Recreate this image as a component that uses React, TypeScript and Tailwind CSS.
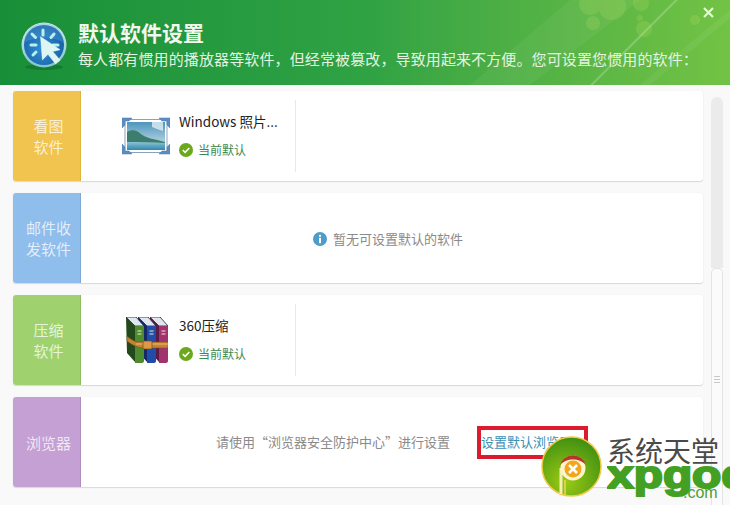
import React from "react";

const cjk = "font-['Noto_Sans_CJK_SC','Microsoft_YaHei',sans-serif]";

const CursorLogo = () => (
  <svg width="46" height="48" viewBox="0 0 46 48" className="shrink-0">
    <defs>
      <linearGradient id="ring" x1="0" y1="0" x2="0" y2="1">
        <stop offset="0" stopColor="#d6f0f2" />
        <stop offset="1" stopColor="#7fc3c9" />
      </linearGradient>
      <radialGradient id="disc" cx="0.45" cy="0.6" r="0.7">
        <stop offset="0" stopColor="#2f8ed6" />
        <stop offset="1" stopColor="#14579c" />
      </radialGradient>
    </defs>
    <ellipse cx="23" cy="45" rx="19" ry="3" fill="#0d6a2a" opacity="0.55" />
    <circle cx="23" cy="23" r="22.5" fill="url(#ring)" />
    <circle cx="23" cy="23" r="20" fill="url(#disc)" />
    <path d="M3 21A20 20 0 0 1 43 21C34 14 13 14 3 21Z" fill="#5aa5dc" opacity="0.35" />
    <g stroke="#b9f0ee" strokeWidth="3" strokeLinecap="round">
      <path d="M22 8v5" />
      <path d="M11 12l3.5 3.5" />
      <path d="M33 12l-3 3.5" />
      <path d="M10 23h5" />
      <path d="M32 23h5" />
      <path d="M12 33l3-3" />
    </g>
    <path d="M21 19l21 14-8 2 8 9-5 4-8-10-6 6z" fill="#ddf6f2" stroke="#fff" strokeWidth="0.5" transform="translate(0 -3) scale(0.93)" />
  </svg>
);

const PhotoIcon = () => (
  <svg width="48" height="38" viewBox="0 0 48 38" className="shrink-0">
    <defs>
      <linearGradient id="sky" x1="0" y1="0" x2="0" y2="1">
        <stop offset="0" stopColor="#4f95bd" />
        <stop offset="1" stopColor="#d3e8ee" />
      </linearGradient>
      <linearGradient id="lake" x1="0" y1="0" x2="0" y2="1">
        <stop offset="0" stopColor="#8cc2d6" />
        <stop offset="1" stopColor="#2f86ab" />
      </linearGradient>
    </defs>
    <rect x="3" y="2.5" width="42" height="33" fill="#fff" stroke="#8aa3bd" />
    <rect x="5" y="5" width="38" height="28" fill="url(#sky)" />
    <path d="M30 5h11v9l-6-2-5-2z" fill="#e8f3f7" opacity="0.75" />
    <path d="M5 15c5-3 10-2 14 2s14 5 24 8v8H5z" fill="#3d7d6d" />
    <path d="M5 25c12 0 26 0 38 1v7H5z" fill="url(#lake)" />
    <g fill="#5c8dc4" stroke="#4a76a8" strokeWidth="0.5">
      <path d="M0 1h10l-3 3H3v4L0 11z" />
      <path d="M48 1H37l3 3h5v4l3 3z" />
      <path d="M0 37h10l-3-3H3v-4l-3-3z" />
      <path d="M48 37H37l3-3h5v-4l3-3z" />
    </g>
  </svg>
);

const Book = ({ x, spine, cover }: { x: number; spine: string; cover: string }) => (
  <g transform={`translate(${x} 0)`}>
    <path d="M0 0l9 9h9l-8-9z" fill="#dfe6ee" stroke="#16213c" strokeWidth="0.8" />
    <path d="M0 0l1 36 8 9V9z" fill={cover} />
    <path d="M9 9h9v35c0 1-1 2-2 2H9z" fill={spine} />
    <path d="M11.5 14h4M11.5 17h4" stroke="#f1ecd2" strokeWidth="1" />
  </g>
);

const BooksIcon = () => (
  <svg width="42" height="47" viewBox="0 0 42 47" className="shrink-0 ml-[4px]">
    <Book x={24} spine="#a1336f" cover="#5c1a44" />
    <Book x={12} spine="#1f4da8" cover="#142a66" />
    <Book x={0} spine="#4e8b2e" cover="#23481c" />
    <path d="M1 19c3 3 6 4 9 6h32v6H19c-7 0-13-3-18-7z" fill="#c98232" stroke="#7d5220" strokeWidth="0.6" />
    <path d="M10 27h32" stroke="#eab164" strokeWidth="1.2" />
    <rect x="17" y="24" width="9" height="8" rx="1" fill="#dc9a46" stroke="#7a4c1a" strokeWidth="0.7" />
  </svg>
);

const CheckIcon = () => (
  <svg width="14" height="14" viewBox="0 0 14 14" className="shrink-0">
    <circle cx="7" cy="7" r="7" fill="#6aa91c" />
    <path d="M3.8 7.2l2.3 2.2 4.2-4.4" fill="none" stroke="#fff" strokeWidth="1.6" />
  </svg>
);

const InfoIcon = () => (
  <svg width="14" height="14" viewBox="0 0 14 14" className="shrink-0">
    <circle cx="7" cy="7" r="7" fill="#4c9ec9" />
    <rect x="6" y="2.8" width="2" height="2" fill="#fff" />
    <rect x="6" y="5.8" width="2" height="5.4" fill="#fff" />
  </svg>
);

const CloseIcon = () => (
  <svg width="11" height="11" viewBox="0 0 11 11">
    <path d="M1 1l9 9M10 1l-9 9" stroke="#e8f7dc" strokeWidth="2.2" />
  </svg>
);

const WatermarkLogo = () => (
  <svg width="62" height="62" viewBox="0 0 62 62">
    <defs>
      <radialGradient id="pGreen" cx="0.4" cy="0.75" r="0.8">
        <stop offset="0" stopColor="#9ccb14" />
        <stop offset="1" stopColor="#3c8c12" />
      </radialGradient>
    </defs>
    <circle cx="30.5" cy="30.5" r="29.5" fill="url(#pGreen)" stroke="#eecb45" strokeWidth="1.5" />
    <path d="M20 58V32" stroke="#f6eeb0" strokeWidth="3" />
    <path d="M24 59V44" stroke="#e8d860" strokeWidth="1.5" />
    <circle cx="32" cy="32" r="12.5" fill="#fdf6cc" />
    <path d="M19 29a13.5 13.5 0 0 1 26 0c-4-4-8-5.500-13-5.500s-9 1.500-13 5.500z" fill="#b9342a" />
    <circle cx="32" cy="33" r="8.500" fill="#f2a51d" />
    <path d="M28 29l8 8M36 29l-8 8" stroke="#fff" strokeWidth="2.500" />
  </svg>
);

const Category = ({ label, color, edge, narrow }: { label: string; color: string; edge: string; narrow?: boolean }) => (
  <div className={`${color} ${edge} w-[68px] shrink-0 rounded-l-[3px] border-r flex items-center justify-center pl-[4px]`}>
    <span className={`${narrow ? "w-[46px]" : "w-[32px]"} text-[15px] leading-[21px] text-center text-white/75`}>{label}</span>
  </div>
);

const SoftwareCell = ({ name, icon }: { name: string; icon: React.ReactNode }) => (
  <div className="w-[215px] h-[72px] border-r border-[#e8e8e8] flex items-center pl-[41px]">
    <div className="w-[56px] flex">{icon}</div>
    <div className="flex flex-col gap-[11px] -mt-[3px] pl-[1px]">
      <span className="text-[13.5px] leading-[20px] text-[#222] whitespace-nowrap">{name}</span>
      <span className="flex items-center gap-[5px] text-[12px] leading-[16px] text-[#3d8a52]">
        <CheckIcon />
        当前默认
      </span>
    </div>
  </div>
);

const Card = ({ children }: { children: React.ReactNode }) => (
  <div className="h-[90px] flex bg-white rounded-[3px] shadow-[0_1px_1px_#d8d8d8,0_0_1px_#e4e4e4]">{children}</div>
);

export default function App() {
  return (
    <div className={`${cjk} relative w-[730px] h-[505px] overflow-hidden bg-[#f9f9f9]`}>
      <header className="relative h-[85px] overflow-hidden bg-gradient-to-r from-[#178f38] via-[#2fa244] to-[#72c344] flex items-center pl-[21px] pt-[6px]">
        <svg width="730" height="85" className="absolute left-0 top-0">
          <path d="M470 85L570 0h70L530 85z" fill="#fff" opacity="0.05" />
          <path d="M590 85L675 0h3l-85 85z" fill="#fff" opacity="0.22" />
          <path d="M640 85L730 10v8l-80 67z" fill="#fff" opacity="0.06" />
          <g fill="#d4ea70" opacity="0.16">
            <circle cx="590" cy="4" r="11" />
            <circle cx="612" cy="6" r="14" />
            <circle cx="593" cy="23" r="7" />
            <circle cx="641" cy="3" r="8" />
            <circle cx="644" cy="29" r="8" />
            <circle cx="640" cy="18" r="3" />
            <circle cx="695" cy="20" r="5" />
          </g>
        </svg>
        <div className="relative flex items-center gap-[11px]">
          <CursorLogo />
          <div className="flex flex-col -mt-[2px]">
            <h1 className="text-[21px] leading-[28px] font-bold text-[#f2f8ef]">默认软件设置</h1>
            <p className="text-[15px] leading-[24px] tracking-[0.12px] text-[#e6f3e2] whitespace-nowrap mt-[1px]">
              每人都有惯用的播放器等软件，但经常被篡改，导致用起来不方便。您可设置您惯用的软件：
            </p>
          </div>
        </div>
        <button className="absolute left-[703px] top-[7px] flex">
          <CloseIcon />
        </button>
      </header>

      <div className="flex pl-[13px] pt-[6px]">
        <main className="w-[690px] flex flex-col gap-[12px] shrink-0">
          <Card>
            <Category label="看图软件" color="bg-[#f0c44f]" edge="border-[#e0b23e]" />
            <div className="flex items-center">
              <SoftwareCell name="Windows 照片..." icon={<PhotoIcon />} />
            </div>
          </Card>
          <Card>
            <Category label="邮件收发软件" color="bg-[#8fbdec]" edge="border-[#7fa9d4]" narrow />
            <div className="flex items-center pl-[232px] gap-[6px] pt-[2px] text-[13px] text-[#8a8a8a]">
              <InfoIcon />
              暂无可设置默认的软件
            </div>
          </Card>
          <Card>
            <Category label="压缩软件" color="bg-[#9fd26f]" edge="border-[#8cbd5e]" />
            <div className="flex items-center">
              <SoftwareCell name="360压缩" icon={<BooksIcon />} />
            </div>
          </Card>
          <Card>
            <Category label="浏览器" color="bg-[#c5a0d5]" edge="border-[#b08cbf]" narrow />
            <div className="flex items-center pl-[135px] text-[13px] text-[#8a8a8a] whitespace-nowrap">
              请使用“浏览器安全防护中心”进行设置
              <a className="ml-[27px] h-[33px] w-[111px] border-[4px] border-[#dc1c2e] flex items-center text-[13px] text-[#3b8fb5] overflow-hidden">
                设置默认浏览器
              </a>
            </div>
          </Card>
        </main>

        <aside className="ml-[8px] mt-[6px] w-[12px] h-[420px] flex flex-col">
          <div className="h-[171px] rounded-t-[6px] bg-[#ebebeb]" />
          <div className="flex-1 rounded-t-[5px] bg-[#fbfbfb] border-x border-t border-[#e4e4e4] flex flex-col items-center pt-[107px] gap-[2px]">
            <span className="w-[6px] h-px bg-[#c8c8c8]" />
            <span className="w-[6px] h-px bg-[#c8c8c8]" />
            <span className="w-[6px] h-px bg-[#c8c8c8]" />
          </div>
        </aside>
      </div>

      {/* site watermark over the bottom right corner */}
      <div className="absolute left-[541px] top-[436px] flex">
        <WatermarkLogo />
        <div className="ml-[4px] flex flex-col">
          <span className="text-[28px] leading-[28px] text-[#4a4a4a] whitespace-nowrap">系统天堂</span>
        </div>
      </div>
      <div className="absolute left-[607px] top-[456px] w-[123px] h-[49px] overflow-hidden">
        <span className="block origin-left scale-x-[1.26] font-['Liberation_Sans',sans-serif] font-bold text-[38px] leading-[38px] text-[#44a022] [-webkit-text-stroke:2px_#44a022] whitespace-nowrap">xpgod</span>
      </div>
      <span className="absolute left-[683px] top-[484px] font-['Liberation_Sans',sans-serif] text-[16px] leading-[18px] text-[#4f9f35]">.com</span>
    </div>
  );
}
